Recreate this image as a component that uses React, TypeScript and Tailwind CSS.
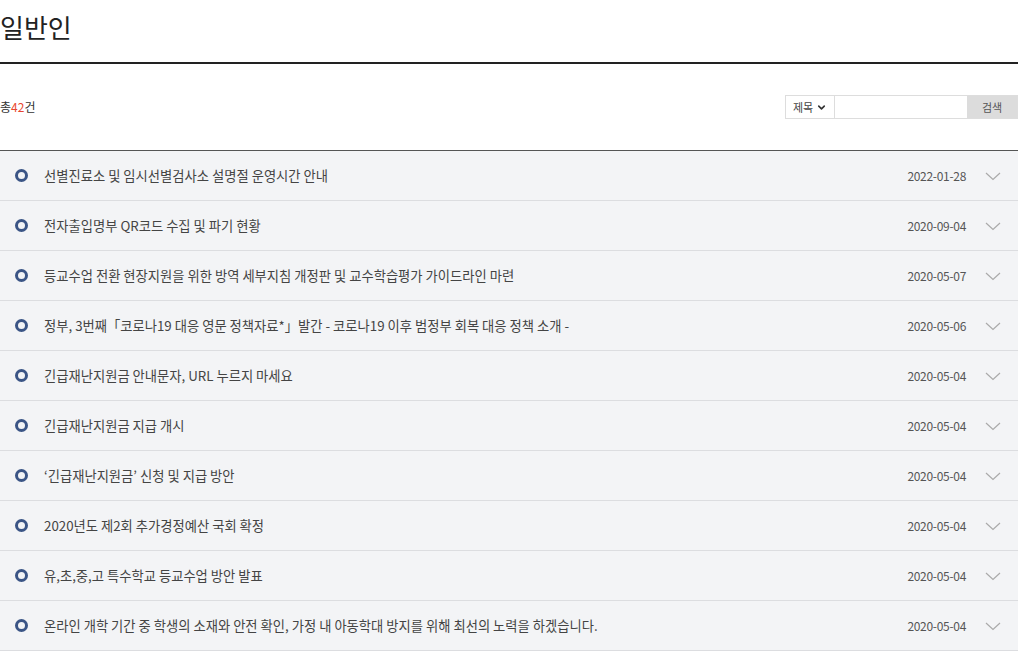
import { ChevronDown } from 'lucide-react'

const rows = [
  { title: '선별진료소 및 임시선별검사소 설명절 운영시간 안내', date: '2022-01-28' },
  { title: '전자출입명부 QR코드 수집 및 파기 현황', date: '2020-09-04' },
  { title: '등교수업 전환 현장지원을 위한 방역 세부지침 개정판 및 교수학습평가 가이드라인 마련', date: '2020-05-07' },
  { title: '정부, 3번째「코로나19 대응 영문 정책자료*」발간 - 코로나19 이후 범정부 회복 대응 정책 소개 -', date: '2020-05-06' },
  { title: '긴급재난지원금 안내문자, URL 누르지 마세요', date: '2020-05-04' },
  { title: '긴급재난지원금 지급 개시', date: '2020-05-04' },
  { title: '‘긴급재난지원금’ 신청 및 지급 방안', date: '2020-05-04' },
  { title: '2020년도 제2회 추가경정예산 국회 확정', date: '2020-05-04' },
  { title: '유,초,중,고 특수학교 등교수업 방안 발표', date: '2020-05-04' },
  { title: '온라인 개학 기간 중 학생의 소재와 안전 확인, 가정 내 아동학대 방지를 위해 최선의 노력을 하겠습니다.', date: '2020-05-04' },
]

function Chevron() {
  return (
    <svg width="16" height="10" viewBox="0 0 16 10" className="ml-[19px] mr-[17px] shrink-0">
      <polyline points="1,2 8,8.5 15,2" fill="none" stroke="#aaa" strokeWidth="1.2" />
    </svg>
  )
}

export default function App() {
  return (
    <div className="w-[1018px] bg-white text-[#333]" style={{ fontFamily: '"Noto Sans CJK KR", "Noto Sans", sans-serif' }}>
      <div className="h-[64px] border-b-2 border-[#222] flex items-start">
        <h1 className="text-[26px] leading-[54px] text-[#222] font-normal">일반인</h1>
      </div>

      <div className="h-[86px] flex items-start justify-between">
        <p className="mt-[35px] text-[12px] leading-[16px] text-[#333]">
          총<span className="text-[#e8462f]">42</span>건
        </p>
        <div className="mt-[31px] flex h-[24px] border border-[#ddd]">
          <div className="w-[49px] flex items-center justify-center gap-[3px] border-r border-[#ddd] text-[11px] text-[#444]">
            제목
            <ChevronDown size={11} strokeWidth={3.5} className="text-[#333]" />
          </div>
          <input className="w-[132px] outline-none bg-white" />
          <button className="w-[50px] bg-[#dcdcdc] text-[11px] text-[#555]">검색</button>
        </div>
      </div>

      <ul className="border-t border-[#555]">
        {rows.map((r, i) => (
          <li key={i} className="h-[50px] flex items-center bg-[#f3f4f6] border-b border-[#dcdde0]">
            <span className="ml-[15px] w-[13px] h-[13px] rounded-full border-[3px] border-[#3b5586] shrink-0" />
            <span className="ml-[16px] flex-1 text-[13.3px] text-[#444] truncate">{r.title}</span>
            <span className="text-[12px] tracking-[-0.3px] text-[#555]">{r.date}</span>
            <Chevron />
          </li>
        ))}
      </ul>
    </div>
  )
}
